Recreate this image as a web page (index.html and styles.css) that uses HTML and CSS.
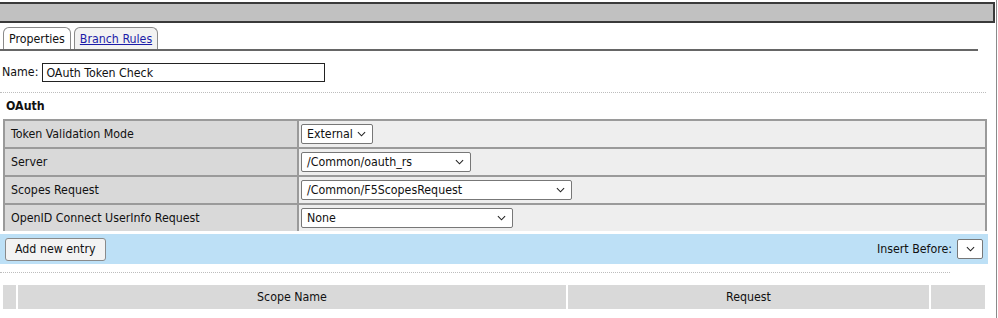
FILE: index.html
```html
<!DOCTYPE html>
<html lang="en">
<head>
  <meta charset="UTF-8" />
  <title>OAuth Scope</title>
  <link rel="stylesheet" href="styles.css">
</head>
<body>
  <div class="page">
    <div class="titlebar"></div>
    <div class="tabs">
      <span class="tab active">Properties</span>
      <span class="tab"><a href="#">Branch Rules</a></span>
    </div>
    <div class="name-row">
      <label for="itemName">Name:</label>
      <input type="text" id="itemName" value="OAuth Token Check" />
    </div>
    <div class="dots"></div>
    <h3>OAuth</h3>
    <table class="props">
      <tr>
        <td class="label">Token Validation Mode</td>
        <td class="value"><span class="select w-ext">External<svg viewBox="0 0 10 6"><path d="M1 1l4 4 4-4" /></svg></span></td>
      </tr>
      <tr>
        <td class="label">Server</td>
        <td class="value"><span class="select w-server">/Common/oauth_rs<svg viewBox="0 0 10 6"><path d="M1 1l4 4 4-4" /></svg></span></td>
      </tr>
      <tr>
        <td class="label">Scopes Request</td>
        <td class="value"><span class="select w-scopes">/Common/F5ScopesRequest<svg viewBox="0 0 10 6"><path d="M1 1l4 4 4-4" /></svg></span></td>
      </tr>
      <tr class="last">
        <td class="label">OpenID Connect UserInfo Request</td>
        <td class="value"><span class="select w-none">None<svg viewBox="0 0 10 6"><path d="M1 1l4 4 4-4" /></svg></span></td>
      </tr>
    </table>
    <div class="toolbar">
      <button type="button">Add new entry</button>
      <div class="insert">
        Insert Before:
        <span class="select w-insert"><svg viewBox="0 0 10 6"><path d="M1 1l4 4 4-4" /></svg></span>
      </div>
    </div>
    <div class="dots short"></div>
    <div class="grid-head">
      <div class="cell c-sel"></div>
      <div class="cell c-name">Scope Name</div>
      <div class="cell c-req">Request</div>
      <div class="cell c-act"></div>
    </div>
  </div>
</body>
</html>
```

FILE: styles.css
```css
body {
  margin: 0;
  font-family: 'DejaVu Sans Condensed', 'DejaVu Sans', sans-serif;
  font-size: 12.3px;
  line-height: 15px;
  color: #111;
  background: #fff;
}
.page {
  height: 318px;
  border-right: 1px solid #8a8a8a;
  width: 996px;
  overflow: hidden;
}
.titlebar {
  height: 17px;
  margin-top: 2px;
  background: #c1c1c1;
  border-top: 2px solid #3a3a3a;
  border-bottom: 2px solid #3a3a3a;
  border-right: 2px solid #3a3a3a;
  width: 993px;
}
.tabs {
  display: flex;
  gap: 3px;
  margin-top: 4px;
  padding-left: 3px;
  width: 975px;
  border-bottom: 2px solid #666;
}
.tab {
  display: block;
  padding: 4px 5px 2px 5px;
  border: 1px solid #8a8a8a;
  border-bottom: none;
  border-radius: 6px 6px 0 0;
  background: #f2f2f2;
  line-height: 15px;
}
.tab.active {
  background: #fff;
}
.tab a {
  color: #1c1ca8;
}
.name-row {
  display: flex;
  align-items: center;
  gap: 4px;
  margin-top: 12px;
  padding-left: 2px;
}
.name-row input {
  width: 275px;
  height: 15px;
  padding: 1px 3px;
  margin: 0;
  border: 1px solid #222;
  font-family: inherit;
  font-size: 12.3px;
  color: #111;
}
.dots {
  margin-top: 10px;
  width: 986px;
  border-top: 1px dotted #bdbdbd;
}
.dots.short {
  width: 950px;
  margin-top: 8px;
}
h3 {
  margin: 5px 0 5px 6px;
  font-size: 12.3px;
  line-height: 16px;
}
.props {
  margin-left: 3px;
  width: 984px;
  border-collapse: collapse;
}
.props td {
  height: 24px;
  padding: 1px 4px;
  border: 2px solid #9a9a9a;
}
.props tr.last td {
  border-bottom: none;
}
.props td.label {
  width: 282px;
  background: #d9d9d9;
  padding-left: 6px;
}
.props td.value {
  background: #eeeeee;
  padding-left: 2px;
}
.select {
  display: inline-flex;
  align-items: center;
  justify-content: space-between;
  box-sizing: border-box;
  height: 20px;
  padding: 0 6px 0 5px;
  background: #fff;
  border: 1px solid #777;
  border-radius: 2px;
  vertical-align: middle;
}
.select svg {
  width: 9px;
  height: 6px;
  fill: none;
  stroke: #222;
  stroke-width: 1.2;
}
.w-ext { width: 72px; }
.w-server { width: 170px; }
.w-scopes { width: 271px; }
.w-none { width: 212px; }
.w-insert { width: 26px; justify-content: center; padding: 0; }
.toolbar {
  display: flex;
  align-items: center;
  justify-content: space-between;
  margin-top: 3px;
  height: 30px;
  padding: 0 5px;
  box-sizing: border-box;
  width: 988px;
  background: #bde0f6;
}
.toolbar button {
  height: 23px;
  padding: 0 9px;
  font-family: inherit;
  font-size: 12.3px;
  color: #111;
  background: #f3f3f3;
  border: 1px solid #8a8a8a;
  border-radius: 3px;
}
.insert {
  display: flex;
  align-items: center;
  gap: 5px;
}
.grid-head {
  display: flex;
  gap: 2px;
  margin: 12px 0 0 3px;
  width: 982px;
  height: 24px;
}
.cell {
  background: #d9d9d9;
  display: flex;
  align-items: center;
  justify-content: center;
}
.c-sel { width: 13px; }
.c-name { width: 548px; }
.c-req { width: 361px; }
.c-act { flex: 1; }
```
